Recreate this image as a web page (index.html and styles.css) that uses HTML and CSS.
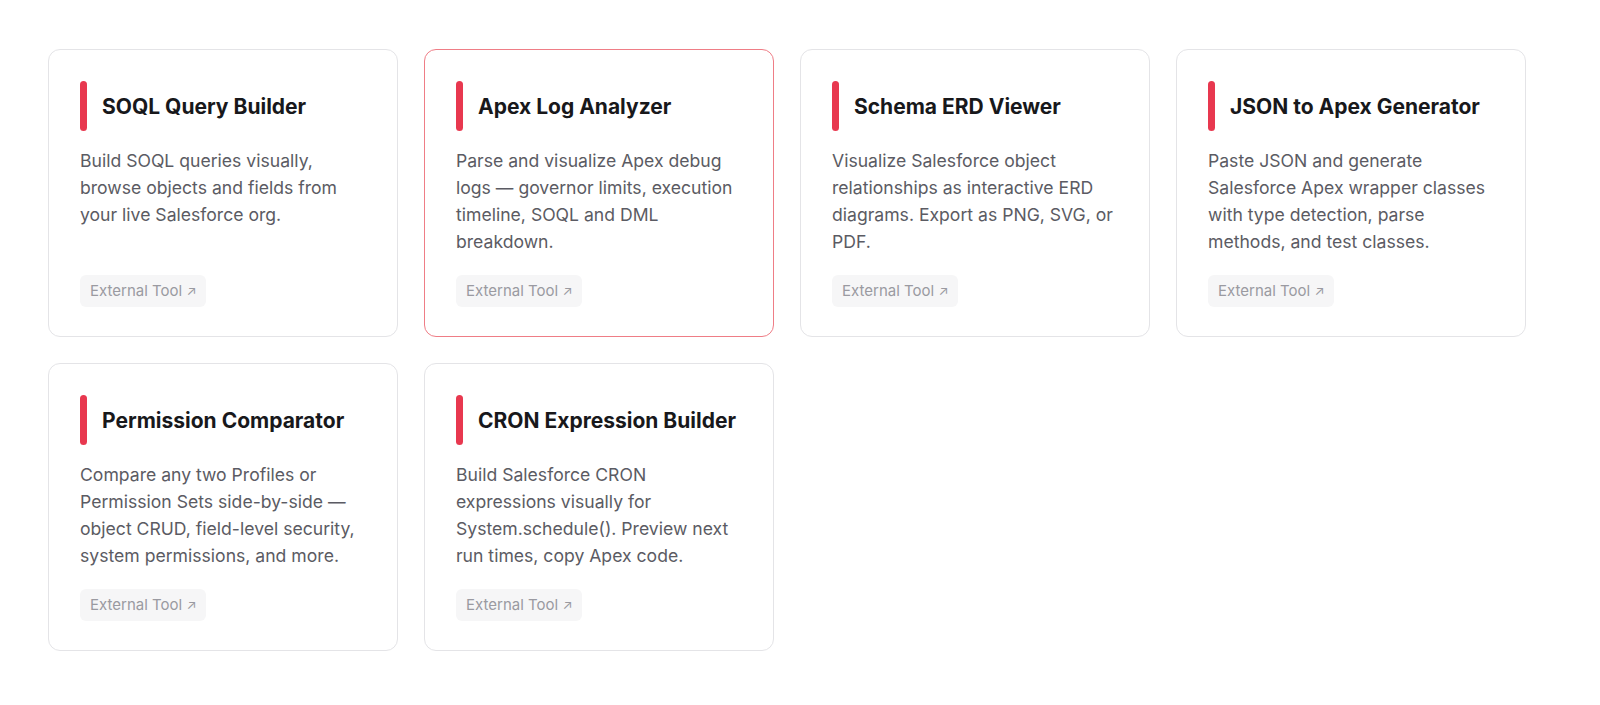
FILE: index.html
```html
<!DOCTYPE html>
<html lang="en">
<head>
<meta charset="utf-8">
<title>Tools</title>
<link rel="stylesheet" href="styles.css">
</head>
<body>
<main class="page">
  <section class="grid">
    <a class="card">
      <div class="card-head"><span class="accent"></span><h3 class="title">SOQL Query Builder</h3></div>
      <p class="desc">Build SOQL queries visually, browse objects and fields from your live Salesforce org.</p>
      <span class="badge">External Tool <span class="arrow">↗</span></span>
    </a>
    <a class="card card-active">
      <div class="card-head"><span class="accent"></span><h3 class="title">Apex Log Analyzer</h3></div>
      <p class="desc">Parse and visualize Apex debug logs — governor limits, execution timeline, SOQL and DML breakdown.</p>
      <span class="badge">External Tool <span class="arrow">↗</span></span>
    </a>
    <a class="card">
      <div class="card-head"><span class="accent"></span><h3 class="title">Schema ERD Viewer</h3></div>
      <p class="desc">Visualize Salesforce object relationships as interactive ERD diagrams. Export as PNG, SVG, or PDF.</p>
      <span class="badge">External Tool <span class="arrow">↗</span></span>
    </a>
    <a class="card">
      <div class="card-head"><span class="accent"></span><h3 class="title">JSON to Apex Generator</h3></div>
      <p class="desc">Paste JSON and generate Salesforce Apex wrapper classes with type detection, parse methods, and test classes.</p>
      <span class="badge">External Tool <span class="arrow">↗</span></span>
    </a>
    <a class="card">
      <div class="card-head"><span class="accent"></span><h3 class="title">Permission Comparator</h3></div>
      <p class="desc">Compare any two Profiles or Permission Sets side-by-side — object CRUD, field-level security, system permissions, and more.</p>
      <span class="badge">External Tool <span class="arrow">↗</span></span>
    </a>
    <a class="card">
      <div class="card-head"><span class="accent"></span><h3 class="title">CRON Expression Builder</h3></div>
      <p class="desc">Build Salesforce CRON expressions visually for System.schedule(). Preview next run times, copy Apex code.</p>
      <span class="badge">External Tool <span class="arrow">↗</span></span>
    </a>
  </section>
</main>
</body>
</html>
```

FILE: styles.css
```css
* { box-sizing: border-box; }
html, body { margin: 0; padding: 0; background: #ffffff; }
body {
  font-family: Inter, "Noto Sans", "Liberation Sans", sans-serif;
  color: #1a1a1a;
}
.page {
  padding: 49px 0 0 48px;
}
.grid {
  width: 1478px;
  display: grid;
  grid-template-columns: repeat(4, 350px);
  column-gap: 26px;
  row-gap: 26px;
}
.card {
  display: flex;
  flex-direction: column;
  height: 288px;
  border: 1px solid #e4e4e7;
  border-radius: 12px;
  padding: 31px 31px 29px 31px;
  background: #fff;
  text-decoration: none;
  color: inherit;
}
.card-active {
  border-color: #ef7d86;
}
.card-head {
  display: flex;
  align-items: center;
  gap: 15px;
  height: 50px;
}
.accent {
  width: 7px;
  height: 50px;
  border-radius: 4px;
  background: #e8384f;
  flex: none;
}
.title {
  margin: 0;
  font-size: 21px;
  font-weight: 700;
  color: #18181b;
  letter-spacing: 0;
}
.desc {
  margin: 16px 0 0 0;
  font-size: 17.6px;
  line-height: 27px;
  color: #5b5b63;
}
.badge {
  margin-top: auto;
  align-self: flex-start;
  background: #f6f6f7;
  color: #9a9aa1;
  font-size: 15px;
  line-height: 20px;
  padding: 6px 10px;
  border-radius: 6px;
}
.arrow {
  font-size: 13px;
}
```
